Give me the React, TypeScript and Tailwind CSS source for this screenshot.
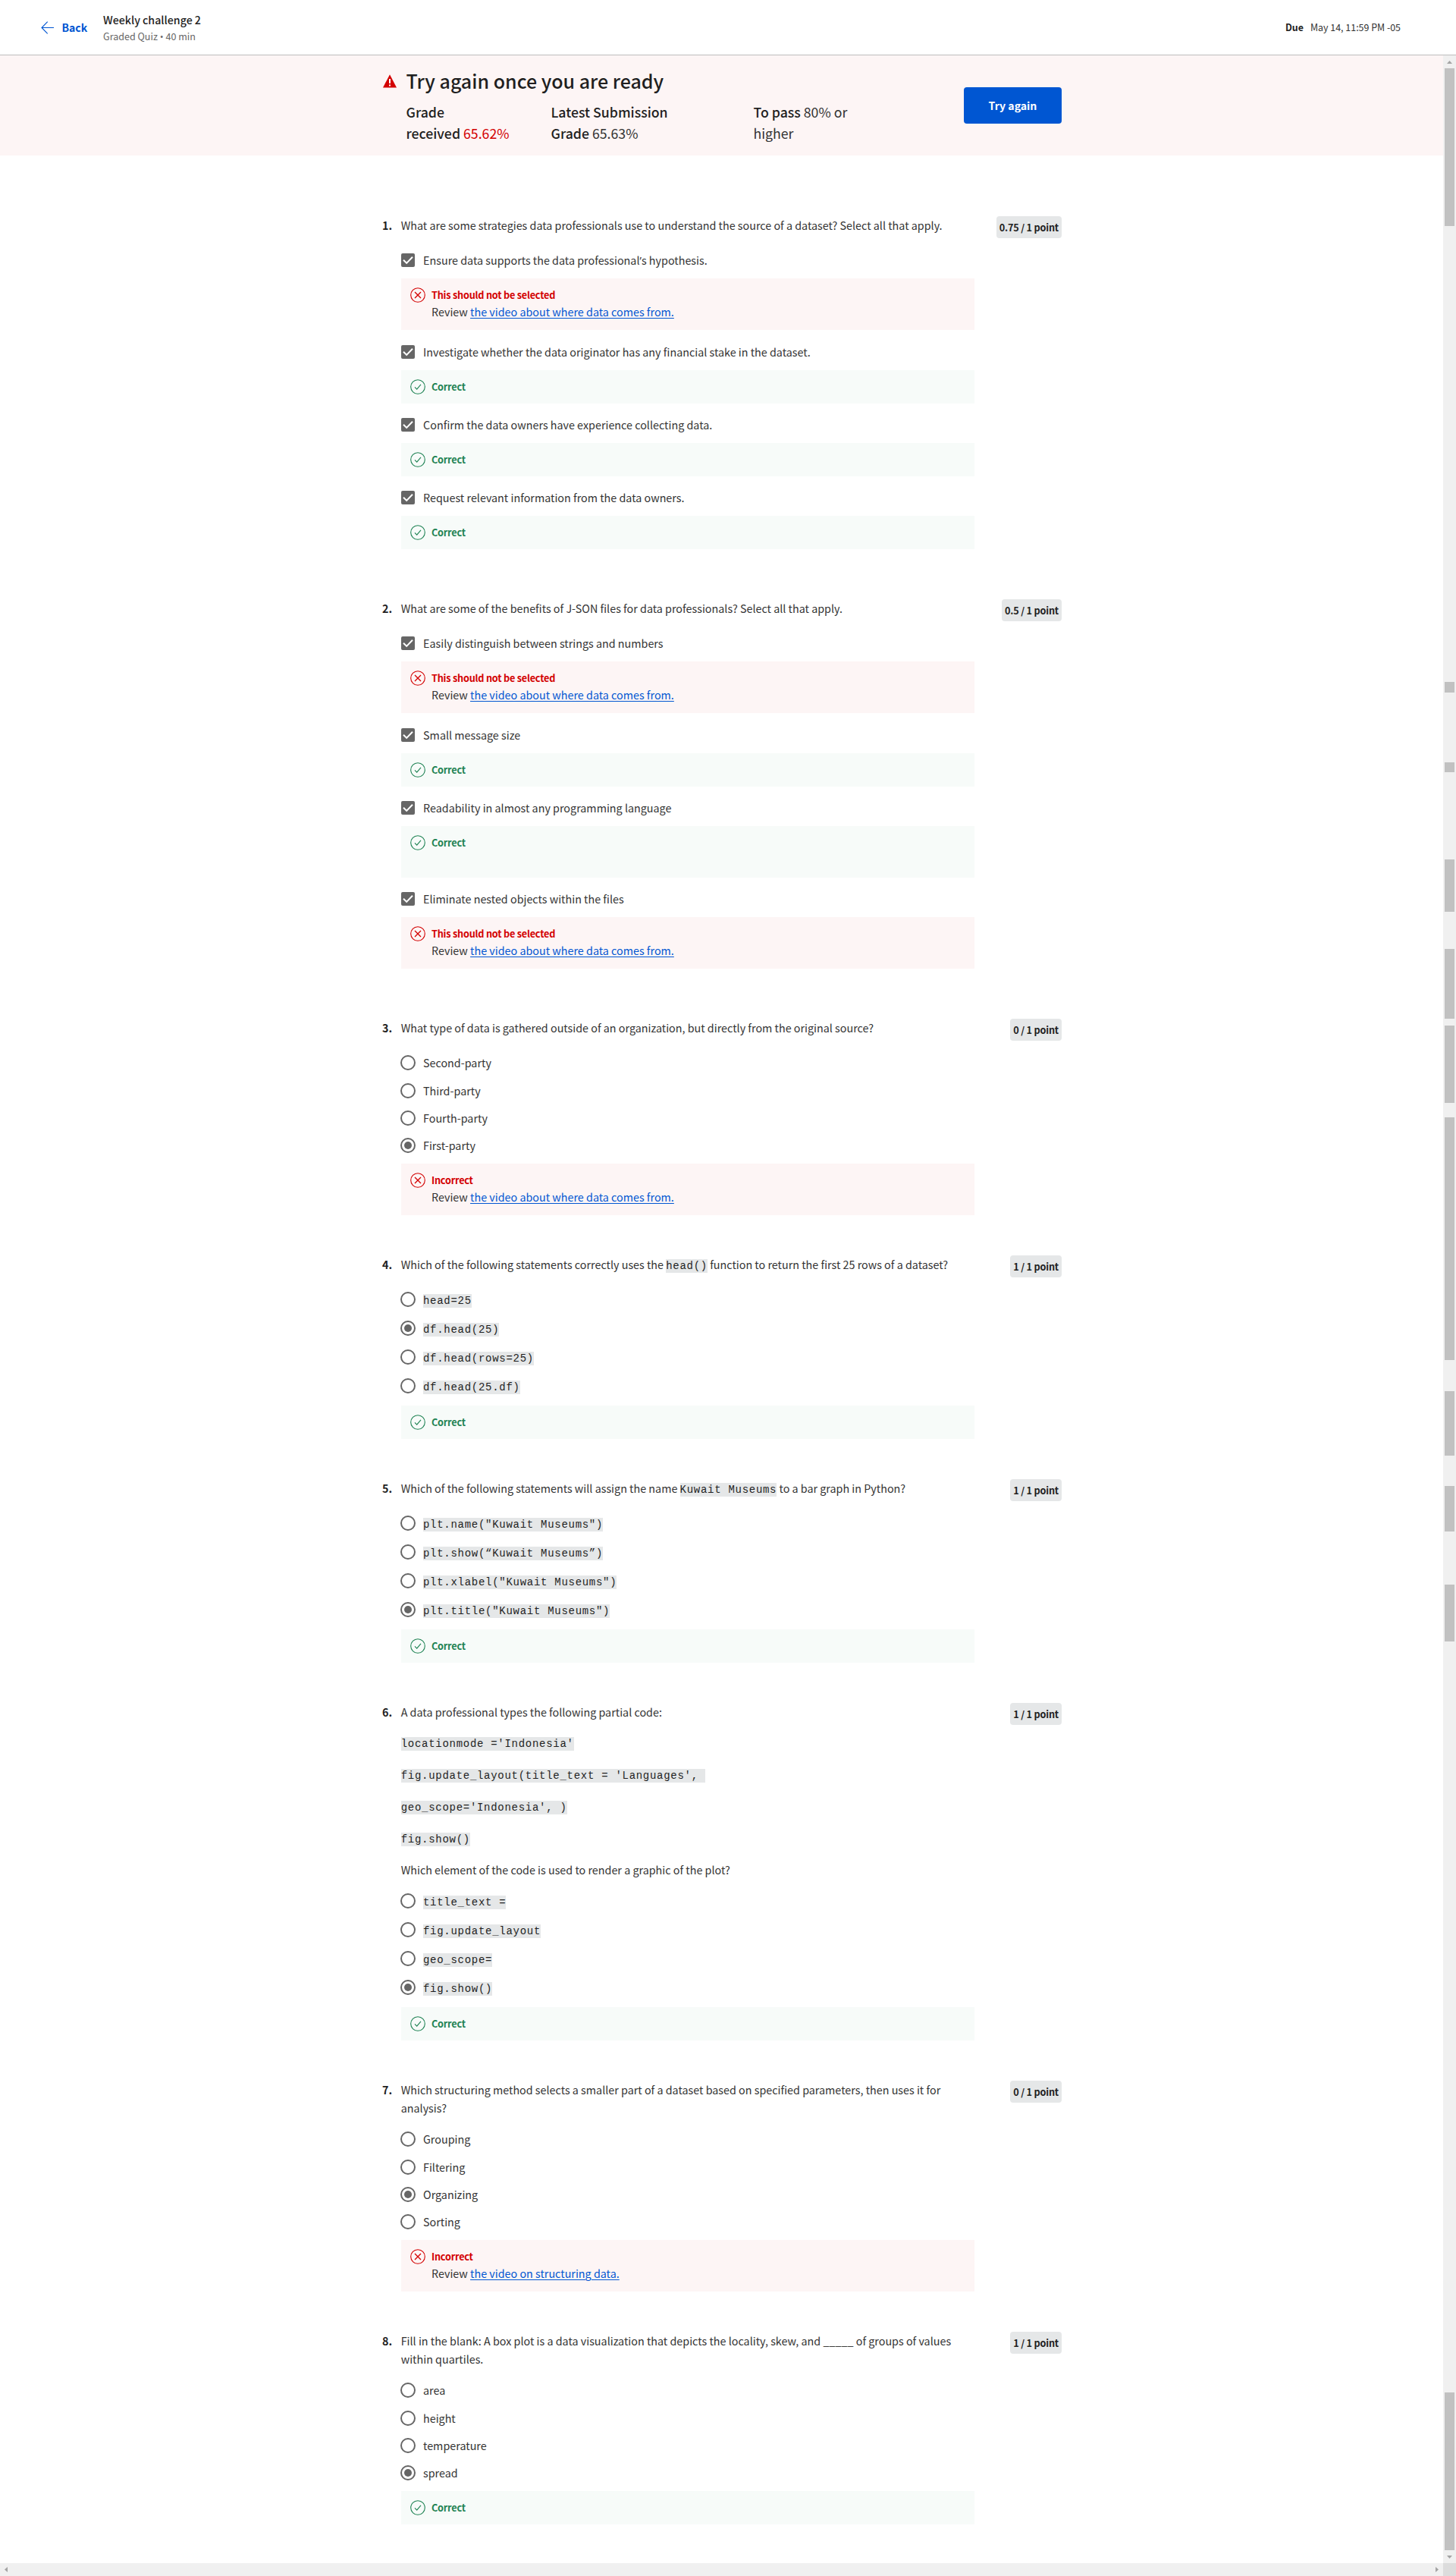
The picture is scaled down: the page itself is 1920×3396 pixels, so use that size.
import type { ReactNode } from "react";

type Feedback = { kind: "correct" | "wrong"; title: string; link?: string; tall?: boolean };
type Choice = { label: string; code?: boolean; selected?: boolean; feedback?: Feedback };
type Question = {
  points: string;
  prompt: ReactNode;
  type: "check" | "radio";
  gap: string;
  choices: Choice[];
  feedback?: Feedback;
};

const SHOULD_NOT: Feedback = { kind: "wrong", title: "This should not be selected", link: "the video about where data comes from." };
const CORRECT: Feedback = { kind: "correct", title: "Correct" };

function Code({ children, className = "" }: { children: ReactNode; className?: string }) {
  return (
    <code
      className={`inline-block h-[18px] whitespace-pre bg-[#e5e7e8] font-['Liberation_Mono',monospace] text-[14px] leading-[19px] tracking-[0.718px] text-[#1f1f1f] ${className}`}
    >
      {children}
    </code>
  );
}

/* Typographic apostrophes are full-width in the CJK face, so they are set in Open Sans. */
function Label({ text }: { text: string }) {
  const parts = text.split("’");
  return (
    <>
      {parts.map((p, i) => (
        <span key={i}>
          {i > 0 && <span className="font-['Open_Sans',sans-serif]">’</span>}
          {p}
        </span>
      ))}
    </>
  );
}

const QUESTIONS: Question[] = [
  {
    points: "0.75 / 1 point",
    prompt: "What are some strategies data professionals use to understand the source of a dataset? Select all that apply.",
    type: "check",
    gap: "mt-[25px]",
    choices: [
      { label: "Ensure data supports the data professional’s hypothesis.", feedback: SHOULD_NOT },
      { label: "Investigate whether the data originator has any financial stake in the dataset.", feedback: CORRECT },
      { label: "Confirm the data owners have experience collecting data.", feedback: CORRECT },
      { label: "Request relevant information from the data owners.", feedback: CORRECT },
    ],
  },
  {
    points: "0.5 / 1 point",
    prompt: "What are some of the benefits of J-SON files for data professionals? Select all that apply.",
    type: "check",
    gap: "mt-[25px]",
    choices: [
      { label: "Easily distinguish between strings and numbers", feedback: SHOULD_NOT },
      { label: "Small message size", feedback: CORRECT },
      { label: "Readability in almost any programming language", feedback: { ...CORRECT, tall: true } },
      { label: "Eliminate nested objects within the files", feedback: SHOULD_NOT },
    ],
  },
  {
    points: "0 / 1 point",
    prompt: "What type of data is gathered outside of an organization, but directly from the original source?",
    type: "radio",
    gap: "mt-6",
    choices: [{ label: "Second-party" }, { label: "Third-party" }, { label: "Fourth-party" }, { label: "First-party", selected: true }],
    feedback: { kind: "wrong", title: "Incorrect", link: "the video about where data comes from." },
  },
  {
    points: "1 / 1 point",
    prompt: (
      <>
        Which of the following statements correctly uses the <Code>head()</Code> function to return the first 25 rows of a dataset?
      </>
    ),
    type: "radio",
    gap: "mt-6",
    choices: [
      { label: "head=25", code: true },
      { label: "df.head(25)", code: true, selected: true },
      { label: "df.head(rows=25)", code: true },
      { label: "df.head(25.df)", code: true },
    ],
    feedback: CORRECT,
  },
  {
    points: "1 / 1 point",
    prompt: (
      <>
        Which of the following statements will assign the name <Code>Kuwait Museums</Code> to a bar graph in Python?
      </>
    ),
    type: "radio",
    gap: "mt-6",
    choices: [
      { label: 'plt.name("Kuwait Museums")', code: true },
      { label: "plt.show(“Kuwait Museums”)", code: true },
      { label: 'plt.xlabel("Kuwait Museums")', code: true },
      { label: 'plt.title("Kuwait Museums")', code: true, selected: true },
    ],
    feedback: CORRECT,
  },
  {
    points: "1 / 1 point",
    prompt: (
      <>
        <p>A data professional types the following partial code:</p>
        <div className="mt-[21px] flex flex-col items-start gap-6">
          <Code>locationmode ='Indonesia'</Code>
          <Code>{"fig.update_layout(title_text = 'Languages', "}</Code>
          <Code>geo_scope='Indonesia', )</Code>
          <Code>fig.show()</Code>
        </div>
        <p className="mt-[19px]">Which element of the code is used to render a graphic of the plot?</p>
      </>
    ),
    type: "radio",
    gap: "mt-[19px]",
    choices: [
      { label: "title_text =", code: true },
      { label: "fig.update_layout", code: true },
      { label: "geo_scope=", code: true },
      { label: "fig.show()", code: true, selected: true },
    ],
    feedback: CORRECT,
  },
  {
    points: "0 / 1 point",
    prompt: (
      <>
        Which structuring method selects a smaller part of a dataset based on specified parameters, then uses it for
        <br />
        analysis?
      </>
    ),
    type: "radio",
    gap: "mt-[19px]",
    choices: [{ label: "Grouping" }, { label: "Filtering" }, { label: "Organizing", selected: true }, { label: "Sorting" }],
    feedback: { kind: "wrong", title: "Incorrect", link: "the video on structuring data." },
  },
  {
    points: "1 / 1 point",
    prompt: (
      <>
        Fill in the blank: A box plot is a data visualization that depicts the locality, skew, and _____ of groups of values
        <br />
        within quartiles.
      </>
    ),
    type: "radio",
    gap: "mt-[19px]",
    choices: [{ label: "area" }, { label: "height" }, { label: "temperature" }, { label: "spread", selected: true }],
    feedback: CORRECT,
  },
];

function FeedbackBox({ kind, title, link, tall }: Feedback) {
  const wrong = kind === "wrong";
  return (
    <div className={`flex pl-3 pt-3 ${wrong ? "bg-[#fdf5f5]" : "bg-[#f7fbf9]"} ${wrong || tall ? "h-[68px]" : "h-11"}`}>
      <svg className={`h-5 w-5 shrink-0 ${wrong ? "text-[#d30001]" : "text-[#1f8354]"}`} viewBox="0 0 20 20" fill="none" stroke="currentColor">
        <circle cx="10" cy="10" r="9.3" strokeWidth="1.1" />
        {wrong ? <path d="M6 6l8 8M14 6l-8 8" strokeWidth="1.3" /> : <path d="M6 10.4l2.7 2.8L14 6.8" strokeWidth="1.1" />}
      </svg>
      <div className="ml-[8.3px]">
        <p className={`text-[12.7px] font-bold leading-5 tracking-[-0.22px] ${wrong ? "text-[#d30001]" : "text-[#1f8354]"}`}>{title}</p>
        {link && (
          <p className="leading-[23px]">
            Review{" "}
            <a className="text-[#0056d2] underline decoration-1 underline-offset-2">{link}</a>
          </p>
        )}
      </div>
    </div>
  );
}

function CheckChoice({ choice, last }: { choice: Choice; last: boolean }) {
  const fb = choice.feedback!;
  return (
    <div className={last ? "" : fb.kind === "wrong" ? "mb-5" : "mb-[19px]"}>
      <div className="mb-[15px] flex h-[18px]">
        <svg className="h-[18px] w-[18px]" viewBox="0 0 18 18" fill="none">
          <rect width="18" height="18" rx="2" fill="#666" />
          <path d="M3 8.7l4.2 4.2L15 4.8" stroke="#fff" strokeWidth="2" />
        </svg>
        <span className="ml-[11.4px] leading-[18px]">
          <Label text={choice.label} />
        </span>
      </div>
      <FeedbackBox {...fb} />
    </div>
  );
}

function RadioChoice({ choice, first, last }: { choice: Choice; first: boolean; last: boolean }) {
  const height = choice.code ? (last ? "h-9" : "h-[38px]") : last ? "h-[34px]" : first ? "h-[37px]" : "h-9";
  return (
    <div className={`-ml-[0.7px] flex ${height}`}>
      <svg className="h-5 w-5 shrink-0" viewBox="0 0 20 20" fill="none">
        <circle cx="10" cy="10" r="9" stroke="#666" strokeWidth="2" />
        {choice.selected && <circle cx="10" cy="10" r="5" fill="#666" />}
      </svg>
      {choice.code ? (
        <Code className="ml-[10px] mt-[3px]">{choice.label}</Code>
      ) : (
        <span className="ml-[10px] leading-5">{choice.label}</span>
      )}
    </div>
  );
}

function QuestionBlock({ q, n }: { q: Question; n: number }) {
  const last = q.choices.length - 1;
  return (
    <section className={`flex items-start ${q.type === "check" ? "mb-[66px]" : "mb-[53px]"}`}>
      <span className="w-[24.7px] shrink-0 font-bold leading-6 text-[#1f1f1f]">{n}.</span>
      <div className="w-[756.5px] shrink-0">
        <div className="whitespace-nowrap leading-6">{q.prompt}</div>
        <div className={q.gap}>
          {q.choices.map((c, i) =>
            q.type === "check" ? (
              <CheckChoice key={c.label} choice={c} last={i === last} />
            ) : (
              <RadioChoice key={c.label} choice={c} first={i === 0} last={i === last} />
            ),
          )}
          {q.feedback && <FeedbackBox {...q.feedback} />}
        </div>
      </div>
      <span className="ml-auto h-[29px] whitespace-nowrap rounded bg-[#e5e7e8] pl-[4.2px] pr-[4px] text-[12.7px] font-bold leading-[30px] tracking-[-0.2px] text-[#1f1f1f]">
        {q.points}
      </span>
    </section>
  );
}

/* Thumb segments of the side scrollbar: [top, bottom] in page pixels. */
const TRACK_TOP = 90;
const THUMBS: [number, number][] = [
  [90, 298],
  [899, 913],
  [1005, 1018],
  [1133, 1202],
  [1251, 1343],
  [1352, 1454],
  [1473, 1793],
  [1834, 1919],
  [1959, 2019],
  [2089, 2164],
  [3154, 3362],
];

function Scrollbar() {
  return (
    <div className="flex w-[17px] flex-col items-center bg-[#f0f0f0]">
      <div className="flex h-[17px] shrink-0 items-center">
        <svg width="7" height="4" viewBox="0 0 7 4" fill="#a3a3a3">
          <path d="M3.5 0L7 4H0z" />
        </svg>
      </div>
      {THUMBS.map(([top, bottom], i) => (
        <div
          key={top}
          className="w-[13px] shrink-0 bg-[#c1c1c1]"
          style={{ marginTop: top - (i ? THUMBS[i - 1][1] : TRACK_TOP), height: bottom - top }}
        />
      ))}
      <div className="flex h-[17px] shrink-0 items-center">
        <svg width="7" height="4" viewBox="0 0 7 4" fill="#a3a3a3">
          <path d="M0 0h7L3.5 4z" />
        </svg>
      </div>
    </div>
  );
}

function Header() {
  return (
    <header className="flex h-[73px] shrink-0 items-center border-b border-[#bdbdbd] pl-[54px] pr-[73px]">
      <svg className="h-[17px] w-[17px]" viewBox="0 0 17 17" fill="none" stroke="#0056d2">
        <path d="M8.7.7L1 8.5l7.7 7.8M1 8.5h16" strokeWidth="1.1" />
      </svg>
      <span className="ml-[10.5px] w-[54.5px] text-[14px] font-bold leading-5 text-[#0056d2]">Back</span>
      <div className="pt-0.5">
        <h1 className="text-[14.2px] font-medium leading-5 text-[#1f1f1f]">Weekly challenge 2</h1>
        <p className="mt-[2px] text-[12.55px] leading-5 text-[#666]">
          Graded Quiz <span className="font-['Open_Sans',sans-serif] text-[13px] leading-none">•</span> 40 min
        </p>
      </div>
      <div className="ml-auto flex gap-[9px] text-[12.43px] leading-5">
        <span className="font-bold text-[#1f1f1f]">Due</span>
        <span className="whitespace-nowrap">May 14, 11:59 PM -05</span>
      </div>
    </header>
  );
}

function Banner() {
  return (
    <div className="flex h-[132px] items-start bg-[#fdf5f5] pl-[505px]">
      <svg className="mt-[25px] h-[18px] w-[18px]" viewBox="0 0 18 18">
        <path d="M9 .2L18 17.4H0z" fill="#d30001" />
        <path d="M8 6h2v6H8zM8 13.4h2v2H8z" fill="#fff" />
      </svg>
      <div className="ml-[12.5px] w-[735.5px] pt-[17px] text-[#1f1f1f]">
        <h2 className="text-[25px] font-medium leading-8">Try again once you are ready</h2>
        <div className="mt-[11px] flex text-[17.7px] leading-7">
          <p className="w-[191px] font-medium">
            Grade
            <br />
            received <span className="font-normal text-[#d30001]">65.62%</span>
          </p>
          <p className="w-[267px] font-medium">
            Latest Submission
            <br />
            Grade <span className="font-normal text-[#333]">65.63%</span>
          </p>
          <p className="font-medium">
            To pass <span className="font-normal text-[#333]">80% or</span>
            <br />
            <span className="font-normal text-[#333]">higher</span>
          </p>
        </div>
      </div>
      <button className="mt-[42px] h-12 w-[129px] rounded bg-[#0056d2] pt-px text-[14.1px] font-bold text-white">Try again</button>
    </div>
  );
}

export default function App() {
  return (
    <div className="flex h-[3396px] w-[1920px] flex-col overflow-hidden bg-white font-['Noto_Sans_CJK_SC','Open_Sans',sans-serif] text-[14.33px] text-[#333]">
      <Header />
      <div className="flex h-[3306px] shrink-0">
        <main className="w-[1903px]">
          <Banner />
          <div className="ml-[504px] mt-20 w-[896px]">
            {QUESTIONS.map((q, i) => (
              <QuestionBlock key={i} q={q} n={i + 1} />
            ))}
          </div>
        </main>
        <Scrollbar />
      </div>
      <div className="flex h-[17px] shrink-0 bg-[#f0f0f0]">
        <div className="flex w-[1903px] items-center justify-between px-1.5">
          <svg width="4" height="7" viewBox="0 0 4 7" fill="#a3a3a3">
            <path d="M4 0v7L0 3.5z" />
          </svg>
          <svg width="4" height="7" viewBox="0 0 4 7" fill="#a3a3a3">
            <path d="M0 0v7l4-3.5z" />
          </svg>
        </div>
        <div className="w-[17px] bg-[#dcdcdc]" />
      </div>
    </div>
  );
}
